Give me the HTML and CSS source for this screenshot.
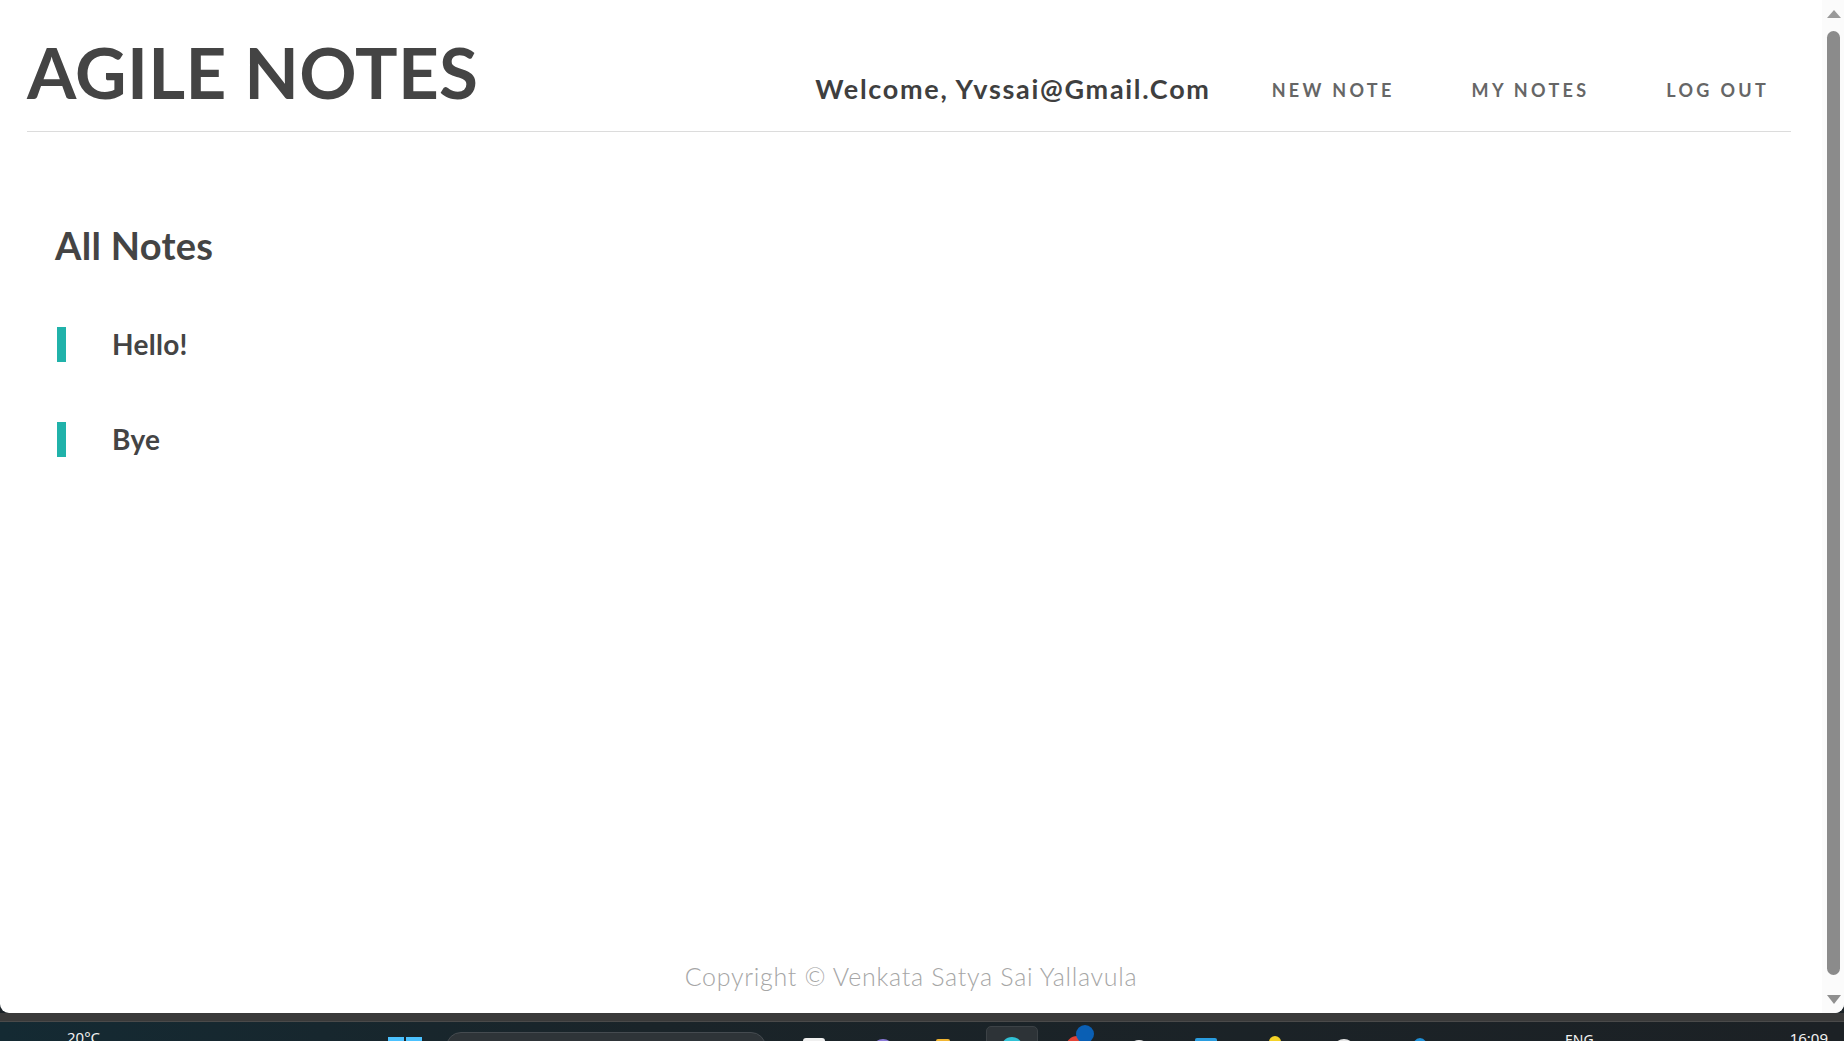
FILE: index.html
```html
<!DOCTYPE html>
<html lang="en">
<head>
<meta charset="utf-8">
<title>Agile Notes</title>
<link rel="stylesheet" href="styles.css">
</head>
<body>
<div class="screen">
  <div class="window">
    <div class="page">
      <header class="topbar">
        <h1 class="brand">AGILE NOTES</h1>
        <nav class="nav">
          <span class="welcome">Welcome, Yvssai@Gmail.Com</span>
          <a class="nav-link" href="#">NEW NOTE</a>
          <a class="nav-link" href="#">MY NOTES</a>
          <a class="nav-link" href="#">LOG OUT</a>
        </nav>
      </header>
      <main class="content">
        <h2 class="section-title">All Notes</h2>
        <ul class="notes">
          <li class="note">Hello!</li>
          <li class="note">Bye</li>
        </ul>
      </main>
      <footer class="footer">Copyright © Venkata Satya Sai Yallavula</footer>
    </div>
    <div class="scrollbar">
      <span class="arrow arrow-up"></span>
      <span class="thumb"></span>
      <span class="arrow arrow-down"></span>
    </div>
  </div>
  <div class="frame-edge"></div>
  <div class="taskbar">
    <span class="tb-text tb-temp">20°C</span>
    <span class="tb-win"><i></i><i></i></span>
    <span class="tb-search"></span>
    <span class="tb-icon tb-white"></span>
    <span class="tb-icon tb-purple"></span>
    <span class="tb-icon tb-orange"></span>
    <span class="tb-active"><span class="tb-icon tb-teal"></span></span>
    <span class="tb-icon tb-red"><span class="tb-badge"></span></span>
    <span class="tb-icon tb-white2"></span>
    <span class="tb-icon tb-blue"></span>
    <span class="tb-icon tb-yellow"></span>
    <span class="tb-icon tb-white3"></span>
    <span class="tb-icon tb-blue2"></span>
    <span class="tb-text tb-eng">ENG</span>
    <span class="tb-text tb-time">16:09</span>
  </div>
</div>
</body>
</html>
```

FILE: styles.css
```css
* { box-sizing: border-box; }

html, body {
  margin: 0;
  padding: 0;
  width: 1844px;
  height: 1041px;
  overflow: hidden;
  background: #1b2227;
  font-family: Lato, "Open Sans", "Liberation Sans", sans-serif;
  color: #444;
}

.screen {
  display: flex;
  flex-direction: column;
  height: 1041px;
}

.window {
  display: flex;
  height: 1013px;
  background: #fff;
  border-radius: 0 0 9px 9px;
  overflow: hidden;
}

.page {
  flex: 1;
  display: flex;
  flex-direction: column;
  min-width: 0;
}

.topbar {
  display: flex;
  justify-content: space-between;
  align-items: flex-end;
  margin: 0 31px 0 27px;
  padding-top: 36px;
  padding-bottom: 24px;
  border-bottom: 1px solid #dcdcdc;
}

.brand {
  margin: 0;
  font-size: 71px;
  line-height: 1;
  font-weight: 700;
  letter-spacing: 0.3px;
  color: #444;
}

.nav {
  display: flex;
  align-items: center;
  height: 28px;
  margin-bottom: 3px;
}

.welcome {
  font-size: 27px;
  line-height: 1;
  font-weight: 700;
  letter-spacing: 1.7px;
  color: #3f3f3f;
  margin-top: -3px;
  margin-right: 61px;
}

.nav-link {
  font-size: 18px;
  line-height: 1;
  font-weight: 700;
  letter-spacing: 3.3px;
  color: #666;
  text-decoration: none;
  margin-right: 77px;
}

.nav-link:last-child { margin-right: 22px; }

.content {
  flex: 1;
  padding-left: 55px;
}

.section-title {
  margin: 94px 0 0;
  font-size: 38px;
  line-height: 1;
  font-weight: 700;
  letter-spacing: 0.3px;
  color: #444;
}

.notes {
  list-style: none;
  margin: 63px 0 0;
  padding: 0;
  display: flex;
  flex-direction: column;
  gap: 60px;
}

.note {
  height: 35px;
  line-height: 35px;
  font-size: 28px;
  font-weight: 700;
  letter-spacing: 0.3px;
  color: #444;
  border-left: 9px solid #20b2aa;
  padding-left: 46px;
  margin-left: 2px;
}

.footer {
  text-align: center;
  font-size: 25px;
  line-height: 1;
  font-weight: 300;
  letter-spacing: 0.7px;
  color: #a6a6a6;
  padding-bottom: 24px;
}

.scrollbar {
  width: 22px;
  background: #fbfbfb;
  display: flex;
  flex-direction: column;
  align-items: center;
  padding: 10px 0 9px 1px;
}

.arrow {
  width: 0;
  height: 0;
  border-left: 7px solid transparent;
  border-right: 7px solid transparent;
}

.arrow-up { border-bottom: 8px solid #9a9a9a; }
.arrow-down { border-top: 9px solid #8f8f8f; }

.thumb {
  width: 13px;
  flex: 1;
  margin: 13px 0 20px;
  background: #8b8b8b;
  border-radius: 7px;
}

.frame-edge {
  height: 9px;
  background: #3a3a3a;
  border-bottom: 1px solid #4a4a4a;
}

.taskbar {
  flex: 1;
  display: flex;
  align-items: flex-start;
  overflow: hidden;
  background: linear-gradient(90deg, #142a33 0%, #1a2429 35%, #1c2125 100%);
}

.tb-text {
  color: #f2f2f2;
  font-family: "Noto Sans", "Liberation Sans", sans-serif;
  font-size: 15px;
  line-height: 1;
  margin-top: 8px;
}

.tb-temp { margin-left: 67px; }

.tb-win {
  display: flex;
  gap: 2px;
  margin: 15px 0 0 288px;
}

.tb-win i {
  width: 16px;
  height: 16px;
  background: #4cc2ff;
}

.tb-search {
  width: 320px;
  height: 30px;
  margin: 10px 0 0 24px;
  border-radius: 15px;
  background: #2e3438;
  border: 1px solid #454b50;
}

.tb-icon {
  width: 22px;
  height: 22px;
  border-radius: 50%;
  margin-top: 14px;
  position: relative;
}

.tb-white { background: #f0f0f0; border-radius: 3px; margin-left: 37px; margin-top: 16px; }
.tb-purple { background: #8a7ad8; margin-left: 47px; margin-top: 17px; }
.tb-orange { background: #f2b632; border-radius: 2px; width: 14px; margin-left: 42px; margin-top: 17px; }

.tb-active {
  width: 52px;
  height: 30px;
  margin: 4px 0 0 36px;
  border-radius: 5px;
  background: #2d3337;
  border: 1px solid #3c4246;
  display: flex;
  justify-content: center;
}

.tb-teal { background: #30c2d6; margin-top: 10px; }

.tb-red { background: #e24236; margin-left: 28px; }

.tb-badge {
  position: absolute;
  left: 10px;
  top: -11px;
  width: 18px;
  height: 18px;
  border-radius: 50%;
  background: #0a5fb4;
}

.tb-white2 { background: #e8e8e8; margin-left: 40px; margin-top: 18px; }
.tb-blue { background: #2a9de0; border-radius: 2px; margin-left: 45px; margin-top: 16px; }
.tb-yellow { background: #f5d327; width: 12px; border-radius: 6px 6px 0 0; margin-left: 52px; margin-top: 14px; }
.tb-white3 { background: #e6e6e6; margin-left: 52px; margin-top: 17px; }
.tb-blue2 { background: #1f8fd6; width: 16px; margin-left: 57px; margin-top: 16px; }

.tb-eng { margin-left: 137px; margin-top: 11px; font-size: 14px; }
.tb-time { margin-left: 196px; margin-top: 9px; }
```
